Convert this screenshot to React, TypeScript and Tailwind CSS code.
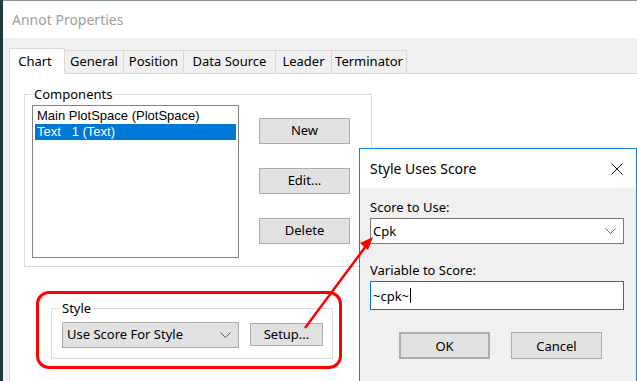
import React from 'react';

const FONT = "font-['Segoe_UI','Noto_Sans',sans-serif]";

const Chevron: React.FC<{ className?: string }> = ({ className }) => (
  <svg width="11" height="7" viewBox="0 0 11 7" fill="none" stroke="#606060" strokeWidth="1" className={className}>
    <polyline points="0.5 0.5 5.5 5.5 10.5 0.5" />
  </svg>
);

const Button: React.FC<{ label: string; className?: string }> = ({ label, className = '' }) => (
  <div
    className={`flex items-center justify-center bg-[#e1e1e1] border border-[#adadad] text-[13px] text-black ${className}`}
  >
    {label}
  </div>
);

const TABS = [
  { label: 'General', w: 'w-[59px]' },
  { label: 'Position', w: 'w-[60px]' },
  { label: 'Data Source', w: 'w-[92px]' },
  { label: 'Leader', w: 'w-[56px]' },
  { label: 'Terminator', w: 'w-[75px]' },
];

export default function App() {
  return (
    <div className={`relative w-[637px] h-[381px] overflow-hidden bg-[#f0f0f0] flex ${FONT}`}>
      {/* desktop strip */}
      <div className="w-[3px] shrink-0 bg-[#1e3b3c]" />

      {/* Annot Properties window */}
      <div className="flex-1 flex flex-col border-t border-[#8a9696]">
        <div className="h-[37px] bg-white flex items-center pl-[9px] text-[14px] text-[#a0a0a0]">
          Annot Properties
        </div>

        {/* tabs */}
        <div className="flex items-end pl-[6px] pt-[10px]">
          <div className="relative z-10 -mb-px w-[56px] h-[26px] bg-white border border-b-0 border-[#d9d9d9] flex items-start justify-center pt-[3px] pr-[4px] text-[13px] text-black">
            Chart
          </div>
          {TABS.map((t) => (
            <div
              key={t.label}
              className={`${t.w} h-[23px] bg-[#f0f0f0] border border-l-0 border-b-0 border-[#d9d9d9] flex items-center justify-center text-[13px] text-black`}
            >
              {t.label}
            </div>
          ))}
        </div>

        {/* tab panel */}
        <div className="flex-1 ml-[6px] bg-white border-t border-l border-[#d9d9d9] flex flex-col">
          <fieldset className="ml-[14px] mt-[12px] w-[348px] h-[181px] border border-[#dcdcdc] pl-[7px]">
            <legend className="ml-[1px] px-[1px] text-[13px] leading-[16px] text-black">Components</legend>
            <div className="flex pt-[3px]">
              <div className="w-[207px] h-[153px] border border-[#828282] bg-white p-[2px] font-['Liberation_Sans',sans-serif] text-[13px] leading-[16px]">
                <div className="h-[16px] pl-[2px] text-black">Main PlotSpace (PlotSpace)</div>
                <div className="h-[16px] pl-[2px] bg-[#0078d7] text-white whitespace-pre">Text   1 (Text)</div>
              </div>
              <div className="ml-[20px] mt-[13px] flex flex-col gap-[24px]">
                <Button label="New" className="w-[91px] h-[26px]" />
                <Button label="Edit..." className="w-[91px] h-[26px]" />
                <Button label="Delete" className="w-[91px] h-[26px]" />
              </div>
            </div>
          </fieldset>

          <fieldset className="ml-[41px] mt-[33px] w-[282px] h-[59px] border border-[#dcdcdc] pl-[10px]">
            <legend className="-ml-[1px] px-[1px] text-[13px] leading-[16px] text-black">Style</legend>
            <div className="flex items-start pt-[6px]">
              <div className="w-[177px] h-[26px] bg-[#e1e1e1] border border-[#adadad] flex items-center justify-between pl-[4px] pr-[7px] text-[13px] text-black">
                <span>Use Score For Style</span>
                <Chevron />
              </div>
              <Button label="Setup..." className="ml-[11px] mt-[1px] w-[73px] h-[23px]" />
            </div>
          </fieldset>
        </div>
      </div>

      {/* red callout around Style */}
      <div className="absolute left-[36px] top-[291px] w-[306px] h-[78px] border-[3px] border-[#ff0000] rounded-[13px] pointer-events-none" />

      {/* Style Uses Score dialog */}
      <div className="absolute left-[359px] top-[148px] w-[278px] h-[240px] border border-[#1883d7] bg-[#f0f0f0] flex flex-col">
        <div className="h-[39px] bg-white flex items-center justify-between pl-[10px] pr-[13px]">
          <span className="text-[14px] text-black">Style Uses Score</span>
          <svg width="12" height="12" viewBox="0 0 12 12" stroke="#111" strokeWidth="1">
            <line x1="0.5" y1="0.5" x2="11.5" y2="11.5" />
            <line x1="11.5" y1="0.5" x2="0.5" y2="11.5" />
          </svg>
        </div>
        <div className="flex flex-col px-[10px] pt-[11px] text-[13px] leading-[16px] text-black">
          <span>Score to Use:</span>
          <div className="mt-[3px] w-[254px] h-[26px] bg-white border border-[#7a7a7a] flex items-center justify-between pl-[2px] pr-[7px]">
            <span>Cpk</span>
            <Chevron />
          </div>
          <span className="mt-[18px]">Variable to Score:</span>
          <div className="mt-[3px] w-[254px] h-[29px] bg-white border border-[#0078d7] flex items-center pl-[2px]">
            <span>~cpk~</span>
            <span className="ml-px w-px h-[15px] bg-black" />
          </div>
          <div className="mt-[22px] ml-[29px] flex gap-[21px]">
            <Button label="OK" className="w-[91px] h-[27px] border-2 border-[#0078d7]" />
            <Button label="Cancel" className="w-[91px] h-[27px]" />
          </div>
        </div>
      </div>

      {/* red arrow from Setup... to Score to Use */}
      <svg className="absolute left-0 top-0 pointer-events-none" width="637" height="381" viewBox="0 0 637 381">
        <line x1="305" y1="328" x2="366" y2="246" stroke="#ff0000" strokeWidth="2.5" />
        <polygon points="373,237 360,243 368,250" fill="#ff0000" />
      </svg>
    </div>
  );
}
